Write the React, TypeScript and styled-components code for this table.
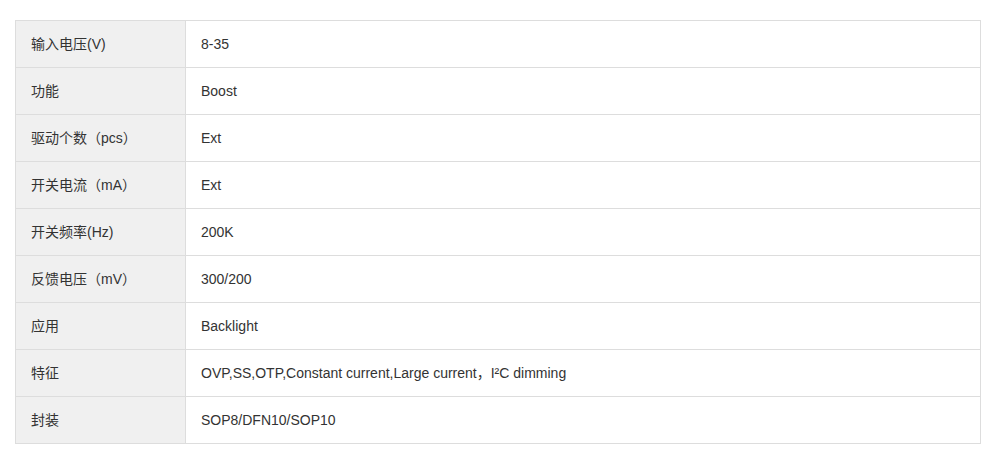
import React from "react";
import styled, { createGlobalStyle } from "styled-components";

const GlobalStyle = createGlobalStyle`
  body {
    margin: 0;
    background: #fff;
    font-family: "Liberation Sans", Arial, "Noto Sans CJK SC", sans-serif;
  }
`;

const specs: [string, string][] = [
  ["输入电压(V)", "8-35"],
  ["功能", "Boost"],
  ["驱动个数（pcs）", "Ext"],
  ["开关电流（mA）", "Ext"],
  ["开关频率(Hz)", "200K"],
  ["反馈电压（mV）", "300/200"],
  ["应用", "Backlight"],
  ["特征", "OVP,SS,OTP,Constant current,Large current，I²C dimming"],
  ["封装", "SOP8/DFN10/SOP10"],
];

const Page = styled.div`
  padding: 20px 0 0 15px;
`;

const Table = styled.table`
  width: 966px;
  table-layout: fixed;
  border-collapse: collapse;
  font-size: 14px;
  line-height: 20px;
  color: #333;
`;

const LabelCol = styled.col`
  width: 170px;
`;

const Cell = styled.td<{ $label?: boolean }>`
  height: 46px;
  padding: 0 15px;
  border: 1px solid #ddd;
  background: ${(p) => (p.$label ? "#f0f0f0" : "#fff")};
  vertical-align: middle;
`;

export default function App() {
  return (
    <Page>
      <GlobalStyle />
      <Table>
        <colgroup>
          <LabelCol />
          <col />
        </colgroup>
        <tbody>
          {specs.map(([k, v]) => (
            <tr key={k}>
              <Cell $label>{k}</Cell>
              <Cell>{v}</Cell>
            </tr>
          ))}
        </tbody>
      </Table>
    </Page>
  );
}
